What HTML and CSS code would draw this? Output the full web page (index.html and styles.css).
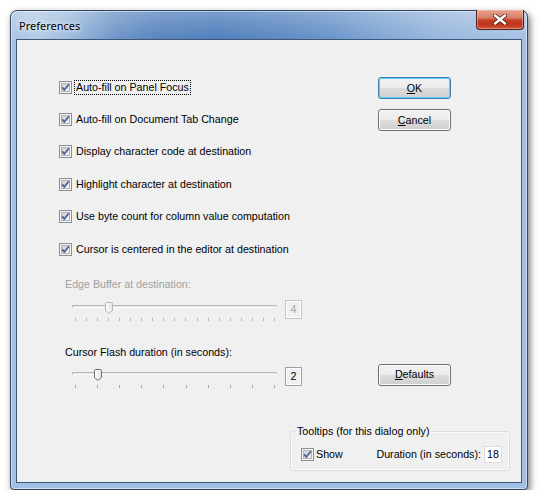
FILE: index.html
```html
<!DOCTYPE html>
<html>
<head>
<meta charset="utf-8">
<title>Preferences</title>
<link rel="stylesheet" href="styles.css">
</head>
<body>
<svg class="defs" width="0" height="0" aria-hidden="true">
  <defs>
    <linearGradient id="cbfill" x1="0" y1="0" x2="1" y2="1">
      <stop offset="0" stop-color="#c9ccd1"/>
      <stop offset="1" stop-color="#f6f6f6"/>
    </linearGradient>
    <linearGradient id="thumbfill" x1="0" y1="0" x2="1" y2="0">
      <stop offset="0" stop-color="#ffffff"/>
      <stop offset="1" stop-color="#e3e3e3"/>
    </linearGradient>
  </defs>
</svg>
<div class="window">
  <div class="titlebar">
    <span class="title">Preferences</span>
    <span class="close">
      <svg width="14" height="11" viewBox="0 0 14 11">
        <path d="M2 1.5 L12 9.5 M12 1.5 L2 9.5" stroke="#3a1712" stroke-opacity="0.75" stroke-width="4.2" stroke-linecap="round"/>
        <path d="M2 1.5 L12 9.5 M12 1.5 L2 9.5" stroke="#ffffff" stroke-width="2.4" stroke-linecap="round"/>
      </svg>
    </span>
  </div>
  <div class="client">
    <div class="top">
      <div class="checks">
        <div class="check-row"><span class="cb"><svg width="13" height="13" viewBox="0 0 13 13"><rect x="0.5" y="0.5" width="12" height="12" fill="#f4f4f4" stroke="#8e8f8f"/><rect x="2.5" y="2.5" width="8" height="8" fill="url(#cbfill)" stroke="#b1b5ba"/><path d="M3.2 6.4 L5.3 8.9 L9.9 3.3" fill="none" stroke="#4a5f97" stroke-width="1.7"/></svg></span><span class="lbl focus">Auto-fill on Panel Focus</span></div>
        <div class="check-row"><span class="cb"><svg width="13" height="13" viewBox="0 0 13 13"><rect x="0.5" y="0.5" width="12" height="12" fill="#f4f4f4" stroke="#8e8f8f"/><rect x="2.5" y="2.5" width="8" height="8" fill="url(#cbfill)" stroke="#b1b5ba"/><path d="M3.2 6.4 L5.3 8.9 L9.9 3.3" fill="none" stroke="#4a5f97" stroke-width="1.7"/></svg></span><span class="lbl">Auto-fill on Document Tab Change</span></div>
        <div class="check-row"><span class="cb"><svg width="13" height="13" viewBox="0 0 13 13"><rect x="0.5" y="0.5" width="12" height="12" fill="#f4f4f4" stroke="#8e8f8f"/><rect x="2.5" y="2.5" width="8" height="8" fill="url(#cbfill)" stroke="#b1b5ba"/><path d="M3.2 6.4 L5.3 8.9 L9.9 3.3" fill="none" stroke="#4a5f97" stroke-width="1.7"/></svg></span><span class="lbl">Display character code at destination</span></div>
        <div class="check-row"><span class="cb"><svg width="13" height="13" viewBox="0 0 13 13"><rect x="0.5" y="0.5" width="12" height="12" fill="#f4f4f4" stroke="#8e8f8f"/><rect x="2.5" y="2.5" width="8" height="8" fill="url(#cbfill)" stroke="#b1b5ba"/><path d="M3.2 6.4 L5.3 8.9 L9.9 3.3" fill="none" stroke="#4a5f97" stroke-width="1.7"/></svg></span><span class="lbl">Highlight character at destination</span></div>
        <div class="check-row"><span class="cb"><svg width="13" height="13" viewBox="0 0 13 13"><rect x="0.5" y="0.5" width="12" height="12" fill="#f4f4f4" stroke="#8e8f8f"/><rect x="2.5" y="2.5" width="8" height="8" fill="url(#cbfill)" stroke="#b1b5ba"/><path d="M3.2 6.4 L5.3 8.9 L9.9 3.3" fill="none" stroke="#4a5f97" stroke-width="1.7"/></svg></span><span class="lbl">Use byte count for column value computation</span></div>
        <div class="check-row"><span class="cb"><svg width="13" height="13" viewBox="0 0 13 13"><rect x="0.5" y="0.5" width="12" height="12" fill="#f4f4f4" stroke="#8e8f8f"/><rect x="2.5" y="2.5" width="8" height="8" fill="url(#cbfill)" stroke="#b1b5ba"/><path d="M3.2 6.4 L5.3 8.9 L9.9 3.3" fill="none" stroke="#4a5f97" stroke-width="1.7"/></svg></span><span class="lbl">Cursor is centered in the editor at destination</span></div>
      </div>
      <div class="buttons">
        <span class="btn default"><u>O</u>K</span>
        <span class="btn"><u>C</u>ancel</span>
      </div>
    </div>

    <div class="field-label disabled edge-label">Edge Buffer at destination:</div>
    <div class="slider-row disabled">
      <div class="trackbar">
        <div class="track"></div>
        <div class="ticks">
          <i></i><i></i><i></i><i></i><i></i><i></i><i></i><i></i><i></i><i></i><i></i><i></i><i></i><i></i><i></i><i></i><i></i><i></i><i></i>
        </div>
        <svg class="thumb" style="left: 33px" width="8" height="12" viewBox="0 0 8 12"><path d="M0.5 1.5 Q0.5 0.5 1.5 0.5 H6.5 Q7.5 0.5 7.5 1.5 V8.5 L4 11.5 L0.5 8.5 Z" fill="url(#thumbfill)"/></svg>
      </div>
      <div class="value">4</div>
    </div>

    <div class="field-label flash-label">Cursor Flash duration (in seconds):</div>
    <div class="slider-row second">
      <div class="trackbar">
        <div class="track"></div>
        <div class="ticks">
          <i></i><i></i><i></i><i></i><i></i><i></i><i></i><i></i><i></i><i></i>
        </div>
        <svg class="thumb" style="left: 22px" width="8" height="12" viewBox="0 0 8 12"><path d="M0.5 1.5 Q0.5 0.5 1.5 0.5 H6.5 Q7.5 0.5 7.5 1.5 V8.5 L4 11.5 L0.5 8.5 Z" fill="url(#thumbfill)"/></svg>
      </div>
      <div class="value">2</div>
      <span class="btn defaults"><u>D</u>efaults</span>
    </div>

    <fieldset class="group">
      <legend>Tooltips (for this dialog only)</legend>
      <div class="group-row">
        <span class="cb"><svg width="13" height="13" viewBox="0 0 13 13"><rect x="0.5" y="0.5" width="12" height="12" fill="#f4f4f4" stroke="#8e8f8f"/><rect x="2.5" y="2.5" width="8" height="8" fill="url(#cbfill)" stroke="#b1b5ba"/><path d="M3.2 6.4 L5.3 8.9 L9.9 3.3" fill="none" stroke="#4a5f97" stroke-width="1.7"/></svg></span>
        <span class="show">Show</span>
        <span class="dur">Duration (in seconds):</span>
        <span class="edit">18</span>
      </div>
    </fieldset>
  </div>
</div>
</body>
</html>
```
FILE: styles.css
```css
* { box-sizing: border-box; }
html, body { margin: 0; padding: 0; background: #ffffff; }
body {
  font-family: "Liberation Sans", Arial, sans-serif;
  font-size: 10.7px;
  color: #000;
}
.defs { position: absolute; width: 0; height: 0; overflow: hidden; }

.window {
  margin: 10px 0 0 10px;
  width: 518px;
  height: 480px;
  border: 1px solid #34475f;
  border-radius: 7px 7px 4px 4px;
  padding: 0 5px 6px;
  background:
    linear-gradient(180deg, rgba(255,255,255,0.25) 0%, rgba(255,255,255,0) 100%) top / 100% 30px no-repeat,
    linear-gradient(90deg, #a9c3e2 0%, #b4cbe5 5%, #9ab8dc 12%, #6c94c7 20%, #5683be 28%, #4f7dbb 40%, #5a87c1 52%, #6893c8 62%, #80a5d3 72%, #96b5dc 82%, #a1bde2 92%, #a6c1e5 100%) top / 100% 30px no-repeat,
    #a2c0e6;
  box-shadow: 2px 3px 7px rgba(0,0,0,0.55), inset 0 0 0 1px rgba(255,255,255,0.45);
  display: flex;
  flex-direction: column;
}

.titlebar {
  height: 28px;
  margin: 0 -5px;
  padding-left: 8px;
  display: flex;
  align-items: center;
}
.title {
  font-family: "Noto Sans", "Open Sans", sans-serif;
  font-size: 11px;
  color: #000;
  text-shadow: 0 0 6px rgba(255,255,255,0.9), 0 0 3px rgba(255,255,255,0.7);
}
.close {
  align-self: flex-start;
  margin: -1px 3px 0 auto;
  width: 48px;
  height: 20px;
  border: 1px solid #4b2018;
  border-top: none;
  border-radius: 0 0 4px 4px;
  background: linear-gradient(180deg, #e8a08c 0%, #d9806a 40%, #c63e25 55%, #bf341b 75%, #d05539 100%);
  box-shadow: inset 0 0 0 1px rgba(255,210,200,0.45);
  display: flex;
  align-items: center;
  justify-content: center;
}

.client {
  flex: 1;
  border: 1px solid #3e5779;
  background: #f0f0f0;
  display: flex;
  flex-direction: column;
}

.top {
  display: flex;
  align-items: flex-start;
}
.checks {
  margin-left: 42px;
  padding-top: 31px;
  display: flex;
  flex-direction: column;
}
.check-row {
  height: 32.4px;
  display: flex;
  align-items: center;
}
.cb { width: 13px; height: 13px; display: block; }
.cb svg { display: block; }
.lbl {
  margin-left: 2px;
  padding: 0 1px;
  line-height: 13px;
  border: 1px dotted transparent;
}
.lbl.focus { border-color: #000; }

.buttons {
  margin: 37px 70px 0 auto;
  display: flex;
  flex-direction: column;
  gap: 10px;
}
.btn {
  width: 73px;
  height: 22px;
  border: 1px solid #707070;
  border-radius: 3px;
  background: linear-gradient(180deg, #f2f2f2 0%, #ebebeb 50%, #dddddd 50%, #cfcfcf 100%);
  box-shadow: inset 0 0 0 1px #fcfcfc;
  display: flex;
  align-items: center;
  justify-content: center;
  line-height: 13px;
}
.btn.default {
  border-color: #3c7fb1;
  box-shadow: inset 0 0 0 1px #5fd0f5;
}
.btn u { text-decoration: underline; text-underline-offset: 1px; }

.field-label {
  margin-left: 48px;
  line-height: 14px;
}
.disabled { color: #a0a0a0; }
.edge-label { margin-top: 11.6px; }
.flash-label { margin-top: 21px; }

.slider-row {
  height: 24px;
  margin-top: 9px;
  display: flex;
  align-items: flex-start;
}
.slider-row.second { margin-top: 8px; }
.trackbar {
  position: relative;
  margin-left: 55px;
  width: 205px;
  height: 24px;
}
.track {
  margin-top: 5px;
  height: 3px;
  border-top: 1px solid #b9b9b9;
  border-left: 1px solid #b9b9b9;
  border-right: 1px solid #d0d0d0;
  border-bottom: 1px solid #ffffff;
  background: #e4e4e4;
}
.ticks {
  margin: 10px 0 0 3px;
  width: 200px;
  height: 3px;
  display: flex;
  justify-content: space-between;
}
.ticks i { width: 1px; height: 3px; background: #a3a3a3; }
.disabled .ticks i { background: #b9b9b9; }
.thumb {
  position: absolute;
  top: 2px;
  display: block;
}
.thumb path { stroke: #707070; stroke-width: 1; }
.disabled .thumb path { stroke: #b5b5b5; }

.value {
  margin-left: 8px;
  width: 17px;
  height: 19px;
  border: 1px solid #a0a0a0;
  box-shadow: inset 0 0 0 1px #ffffff;
  display: flex;
  align-items: center;
  justify-content: center;
  color: #000;
}
.disabled .value { color: #a8a8a8; border-color: #c4c4c4; }

.defaults {
  margin: -3px 70px 0 auto;
}

.group {
  margin: 34.5px 11px 0 auto;
  width: 220px;
  min-width: 0;
  padding: 7.5px 7px 7px 10px;
  border: 1px solid #d5dfe5;
  border-radius: 3px;
  box-shadow: inset 0 0 0 1px #fafafa;
}
.group legend {
  margin-left: -6px;
  padding: 0 2px;
  line-height: 13px;
}
.group-row {
  height: 17px;
  display: flex;
  align-items: center;
}
.show { margin-left: 2px; }
.dur { margin-left: auto; }
.edit {
  margin-left: 3px;
  width: 18px;
  height: 17px;
  background: #fff;
  border: 1px solid #dcdcdc;
  display: flex;
  align-items: center;
  justify-content: center;
}
```
